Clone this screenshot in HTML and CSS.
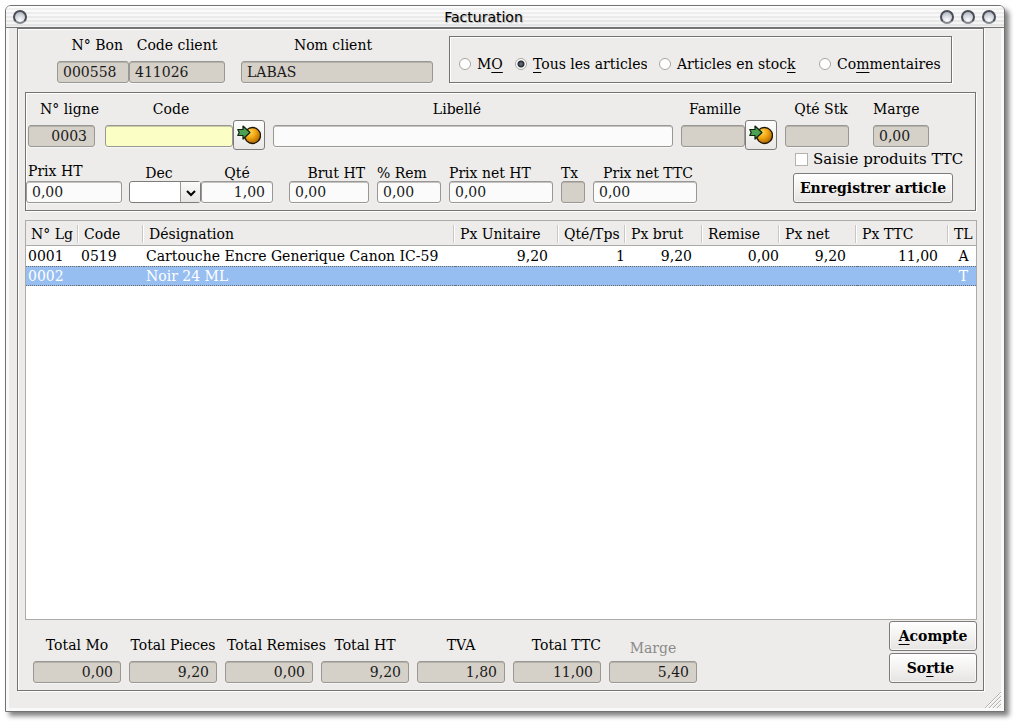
FILE: index.html
```html
<!DOCTYPE html>
<html lang="fr">
<head>
<meta charset="utf-8">
<title>Facturation</title>
<link rel="stylesheet" href="styles.css">
</head>
<body>
<svg class="defs" aria-hidden="true">
  <defs>
    <radialGradient id="ball" cx="35%" cy="30%" r="75%">
      <stop offset="0" stop-color="#ffd75a"/><stop offset=".45" stop-color="#f3a812"/><stop offset="1" stop-color="#a86400"/>
    </radialGradient>
    <symbol id="pick" viewBox="0 0 24 20">
      <circle cx="15.500" cy="10.500" r="8" fill="url(#ball)" stroke="#1d1405" stroke-width="1.300"/>
      <path d="M.8 4.500h5.200V1L13 7.500 6 14v-3.500H.8l1.400-3z" fill="#4aa152" stroke="#10230f" stroke-width="1.200" stroke-linejoin="round"/>
    </symbol>
  </defs>
</svg>
<div class="window">
  <header class="titlebar">
    <button class="orb" aria-label="Menu"></button>
    <h1 class="title">Facturation</h1>
    <div class="orbs">
      <button class="orb" aria-label="Réduire"></button>
      <button class="orb" aria-label="Agrandir"></button>
      <button class="orb" aria-label="Fermer"></button>
    </div>
  </header>
  <main class="client">
    <form class="panel">
      <section class="head">
        <div class="field c-bon"><label class="end" for="bon">N° Bon</label><input id="bon" value="000558" readonly></div>
        <div class="field"><label for="client">Code client</label><input id="client" value="411026" readonly></div>
        <div class="field c-nom"><label for="nom">Nom client</label><input id="nom" value="LABAS" readonly></div>
        <div class="filter" role="radiogroup" aria-label="Filtre">
          <label class="choice"><input type="radio" name="f"><span>M<u>O</u></span></label>
          <label class="choice clipped"><input type="radio" name="f" checked><span><u>T</u>ous les articles</span></label>
          <label class="choice"><input type="radio" name="f"><span>Articles en stoc<u>k</u></span></label>
          <label class="choice"><input type="radio" name="f"><span>Co<u>m</u>mentaires</span></label>
        </div>
      </section>

      <section class="entry">
        <div class="row-a">
          <div class="field a-ligne"><label class="end" for="ligne">N° ligne</label><input class="num" id="ligne" value="0003" readonly></div>
          <div class="field a-code"><label for="code">Code</label><input class="active" id="code"></div>
          <button class="pick a-pick1" type="button" aria-label="Choisir un article"><svg><use href="#pick"/></svg></button>
          <div class="field a-lib"><label for="lib">Libellé</label><input id="lib"></div>
          <div class="field a-fam"><label for="fam">Famille</label><input id="fam" readonly></div>
          <button class="pick a-pick2" type="button" aria-label="Choisir une famille"><svg><use href="#pick"/></svg></button>
          <div class="field a-stk"><label for="stk">Qté Stk</label><input id="stk" readonly></div>
          <div class="field a-marge"><label class="start" for="marge">Marge</label><input id="marge" value="0,00" readonly></div>
        </div>
        <div class="row-b">
          <div class="field b-prix"><label class="start" for="prix">Prix HT</label><input id="prix" value="0,00"></div>
          <div class="field b-dec"><label for="dec">Dec</label>
            <div class="combo"><select id="dec"><option></option></select><span class="arrow"><svg viewBox="0 0 10 8"><path d="M1 1l4 4 4-4" /></svg></span></div></div>
          <div class="field b-qte"><label for="qte">Qté</label><input class="num" id="qte" value="1,00"></div>
          <div class="field b-brut"><label class="end" for="brut">Brut HT</label><input id="brut" value="0,00"></div>
          <div class="field b-rem"><label class="start" for="rem">% Rem</label><input id="rem" value="0,00"></div>
          <div class="field b-net"><label class="start" for="net">Prix net HT</label><input id="net" value="0,00"></div>
          <div class="field b-tx"><label class="start" for="tx">Tx</label><input id="tx" readonly></div>
          <div class="field b-ttc"><label class="end" for="ttc">Prix net TTC</label><input id="ttc" value="0,00"></div>
          <div class="save">
            <label class="tick"><input type="checkbox"><span>Saisie produits TTC</span></label>
            <button class="btn" type="button">Enregistrer article</button>
          </div>
        </div>
      </section>

      <section class="list">
        <table>
          <colgroup><col class="w-lg"><col class="w-code"><col><col class="w-unit"><col class="w-qte"><col class="w-px"><col class="w-px"><col class="w-px"><col class="w-ttc"><col class="w-tl"></colgroup>
          <thead><tr><th>N° Lg</th><th>Code</th><th>Désignation</th><th>Px Unitaire</th><th>Qté/Tps</th><th>Px brut</th><th>Remise</th><th>Px net</th><th>Px TTC</th><th>TL</th></tr></thead>
          <tbody>
            <tr><td>0001</td><td>0519</td><td>Cartouche Encre Generique Canon IC-59</td><td class="r">9,20</td><td class="r0">1</td><td class="r">9,20</td><td class="r0">0,00</td><td class="r">9,20</td><td class="r">11,00</td><td class="mid">A</td></tr>
            <tr class="selected"><td>0002</td><td></td><td>Noir 24 ML</td><td></td><td></td><td></td><td></td><td></td><td></td><td class="mid">T</td></tr>
          </tbody>
        </table>
      </section>

      <footer class="totals">
        <div class="sums">
          <div class="field"><label for="t1">Total Mo</label><input class="num" id="t1" value="0,00" readonly></div>
          <div class="field"><label for="t2">Total Pieces</label><input class="num" id="t2" value="9,20" readonly></div>
          <div class="field"><label class="start" for="t3">Total Remises</label><input class="num" id="t3" value="0,00" readonly></div>
          <div class="field"><label for="t4">Total HT</label><input class="num" id="t4" value="9,20" readonly></div>
          <div class="field"><label for="t5">TVA</label><input class="num" id="t5" value="1,80" readonly></div>
          <div class="field"><label class="end" for="t6">Total TTC</label><input class="num" id="t6" value="11,00" readonly></div>
          <div class="field"><label class="dim" for="t7">Marge</label><input class="num" id="t7" value="5,40" readonly></div>
        </div>
        <div class="actions">
          <button class="btn" type="button"><span><u>A</u>compte</span></button>
          <button class="btn sortie" type="button"><span>So<u>r</u>tie</span></button>
        </div>
      </footer>
    </form>
    <svg class="grip" viewBox="0 0 17 17" aria-hidden="true">
      <path class="lite" d="M2 17L17 2M6 17L17 6M10 17L17 10M14 17l3-3"/>
      <path class="dark" d="M1 17L17 1M5 17L17 5M9 17L17 9M13 17l4-4"/>
    </svg>
  </main>
</div>
</body>
</html>
```
FILE: styles.css
```css
* { box-sizing: border-box; }

body {
  margin: 0;
  height: 100vh;
  padding: 5px 9px 9px 5px;
  background: #fff;
  color: #000;
  font: 14px/18px "DejaVu Serif", serif;
}

input, select, button { font: inherit; color: inherit; margin: 0; min-width: 0; }
u { text-underline-offset: 3px; text-decoration-thickness: 1px; text-decoration-skip-ink: none; }
.defs { position: absolute; width: 0; height: 0; }

/* Window frame */
.window {
  display: flex;
  flex-direction: column;
  height: 100%;
  border: 1px solid #737373;
  border-radius: 6px 6px 0 0;
  box-shadow: 4px 4px 5px rgba(0, 0, 0, .5);
  background: #edecea;
}
.titlebar {
  display: flex;
  align-items: center;
  justify-content: space-between;
  height: 22px;
  flex: none;
  padding: 0 8px 0 7px;
  border-bottom: 1px solid #737373;
  border-radius: 5px 5px 0 0;
  background:
    linear-gradient(rgba(255, 255, 255, .5), rgba(215, 215, 215, .25)),
    repeating-linear-gradient(#fbfbfb 0 2px, #e6e6e6 2px 4px);
}
.title {
  margin: 0;
  font: 14px/18px "DejaVu Sans", sans-serif;
  text-shadow: 1px 1px 1px #aaa;
}
.orbs { display: flex; gap: 7px; }
.orb {
  width: 14px;
  height: 14px;
  padding: 0;
  border: 2px solid #4a4d55;
  border-bottom-color: #85888e;
  border-radius: 50%;
  background: radial-gradient(circle at 50% 85%, #fff, #ccd1d9 60%, #9aa1ad);
}
.client {
  position: relative;
  display: flex;
  flex: 1;
  min-height: 0;
  padding: 0 20px 20px 11px;
  box-shadow: inset 3px 0 #f9f9f9, inset -3px -3px #f9f9f9;
}
.panel {
  display: flex;
  flex-direction: column;
  flex: 1;
  min-width: 0;
  border: 1px solid #737373;
  box-shadow: inset 1px 1px #fff, 1px 1px #fff;
}
.grip { position: absolute; right: 3px; bottom: 3px; width: 17px; height: 17px; fill: none; }
.grip .dark { stroke: #b5b2ae; }
.grip .lite { stroke: #fff; }

/* Fields */
.field { display: flex; flex-direction: column; gap: 7px; min-width: 0; }
.field label { display: block; height: 18px; white-space: nowrap; text-align: center; }
.field label.start { text-align: left; }
.field label.end { text-align: right; }
.field label.dim { color: #8b8a88; }
.field input {
  width: 100%;
  height: 22px;
  padding: 0 5px;
  border: 1px solid #9a9894;
  border-radius: 3px;
  background: #fbfbfb;
  box-shadow: inset 0 1px #c4c3c1, 0 1px #f7f6f5;
  color: #1a1a1a;
  outline: 0;
}
.field input[readonly] { background: #d5d0c8; box-shadow: inset 0 1px #b6b2ab, 0 1px #f7f6f5; }
.field input.active { background: #fbffc5; box-shadow: inset 0 1px #c8cba4, 0 1px #f7f6f5; }
.field input.num { text-align: right; padding-right: 7px; }

.btn {
  width: 100%;
  height: 30px;
  padding: 0;
  border: 1px solid #7d7c7a;
  border-radius: 3px;
  background: linear-gradient(#fff, #f3f2f1 50%, #e5e4e2);
  box-shadow: inset 0 0 0 1px rgba(255, 255, 255, .6);
  color: #000;
  font-weight: bold;
  white-space: nowrap;
}

/* Header row */
.head {
  display: grid;
  grid-template-columns: minmax(0, 72fr) minmax(0, 96fr) minmax(0, 16fr) minmax(0, 192fr) minmax(0, 16fr) minmax(0, 503fr);
  padding: 7px 31px 0 39px;
}
.head .c-nom { grid-column: 4; }
.head .c-bon label { padding-right: 6px; }
.head .c-nom label { padding-right: 8px; }
.filter {
  grid-column: 6;
  display: grid;
  grid-template-columns: 44fr 132fr 148fr 132fr;
  column-gap: 12px;
  height: 47px;
  padding: 18px 0 0 9px;
  border: 1px solid #737373;
  box-shadow: inset 1px 1px #fff, 1px 1px #fff;
}
.choice { display: flex; gap: 6px; min-width: 0; height: 20px; white-space: nowrap; }
.choice.clipped { overflow: hidden; }
.choice input {
  appearance: none;
  flex: none;
  width: 12px;
  height: 12px;
  margin-top: 3px;
  border: 1px solid #aba6a0;
  border-radius: 50%;
  background: #fff;
}
.choice input:checked { background: radial-gradient(circle, #5b6573 0 1px, #20262e 3px, #fff 4px); }

/* Article entry */
.entry {
  margin: 9px 7px 0;
  height: 119px;
  border: 1px solid #737373;
  box-shadow: inset 1px 1px #fff, 1px 1px #fff;
}
.row-a, .row-b { display: grid; align-items: end; }
.row-a {
  grid-template-columns: 2fr 67fr 10fr 128fr 32px 8fr 400fr 8fr 64fr 32px 8fr 64fr 24fr 56fr 46fr;
  padding-top: 7px;
}
.row-a .field { margin-bottom: 3px; }
.a-ligne { grid-column: 2; }
.a-code { grid-column: 4; }
.a-pick1 { grid-column: 5; }
.a-lib { grid-column: 7; }
.a-fam { grid-column: 9; }
.a-pick2 { grid-column: 10; }
.a-stk { grid-column: 12; }
.a-marge { grid-column: 14; }
.a-ligne label.end { margin-right: -4px; }
.a-code label { padding-left: 4px; }
.a-lib label { padding-right: 32px; }
.a-fam label { padding-left: 4px; }
.a-stk label { margin-right: -8px; }
.pick {
  display: flex;
  align-items: center;
  justify-content: center;
  height: 30px;
  padding: 0;
  border: 1px solid #7d7c7a;
  border-radius: 3px;
  background: linear-gradient(#fdfdfd, #e8e7e5);
}
.pick svg { width: 24px; height: 20px; }

.row-b {
  grid-template-columns: 96fr 7fr 72fr 72fr 16fr 80fr 8fr 64fr 8fr 104fr 8fr 24fr 8fr 104fr 96fr minmax(0, 160fr) 22fr;
}
.row-b .field { gap: 0; }
.row-b .field label { line-height: 20px; }
.b-prix { grid-column: 1; }
.b-dec { grid-column: 3; }
.b-qte { grid-column: 4; }
.b-brut { grid-column: 6; }
.b-rem { grid-column: 8; }
.b-net { grid-column: 10; }
.b-tx { grid-column: 12; }
.b-ttc { grid-column: 14; }
.row-b .b-prix label { padding-left: 2px; height: 20px; }
.b-dec label { padding-right: 12px; }
.b-brut label.end, .b-ttc label.end { padding-right: 4px; }
.combo { position: relative; height: 22px; }
.combo select {
  appearance: none;
  width: 100%;
  height: 22px;
  padding: 0;
  border: 1px solid #7d7c7a;
  border-radius: 3px;
  background: #fff;
}
.combo .arrow {
  position: absolute;
  inset: 1px 1px 1px auto;
  display: flex;
  align-items: center;
  justify-content: center;
  width: 20px;
  border-left: 1px solid #9a9894;
  background: linear-gradient(#fbfbfb, #e6e5e3);
  pointer-events: none;
}
.combo .arrow svg { width: 10px; height: 8px; margin-top: 3px; fill: none; stroke: #000; stroke-width: 2; }
.save { grid-column: 16; display: flex; flex-direction: column; gap: 5px; min-width: 0; }
.tick {
  display: flex;
  align-items: center;
  gap: 5px;
  height: 18px;
  padding-left: 2px;
  font-size: 15px;
  white-space: nowrap;
}
.tick input {
  appearance: none;
  flex: none;
  width: 13px;
  height: 13px;
  border: 1px solid #b5b1ac;
  background: #fff;
}

/* Line list */
.list {
  flex: 1;
  min-height: 0;
  margin: 9px 6px 0 7px;
  border: 1px solid #adaba8;
  background: #fff;
}
.list table { width: 100%; table-layout: fixed; border-collapse: separate; border-spacing: 0; }
.w-lg { width: 53px; }
.w-code { width: 65px; }
.w-unit { width: 104px; }
.w-qte { width: 67px; }
.w-px { width: 77px; }
.w-ttc { width: 92px; }
.w-tl { width: 27px; }
.list th {
  height: 25px;
  padding: 2px 0 0 5px;
  border-bottom: 1px solid #adaba8;
  background: linear-gradient(#c9c7c4, #c9c7c4) right 1px top 4px / 1px 18px no-repeat, linear-gradient(#fff, #fff) right 0 top 4px / 1px 18px no-repeat, #edecea;
  font-weight: normal;
  text-align: left;
  white-space: nowrap;
}
.list th:last-child { background: #edecea; }
.list td { height: 20px; padding: 0 0 0 2px; white-space: nowrap; }
.list td.r { text-align: right; padding-right: 11px; }
.list td.r0 { text-align: right; padding-right: 1px; }
.list td.mid { text-align: center; }
.list .selected td {
  border-top: 1px dotted #6b6b6b;
  border-bottom: 1px dotted #6b6b6b;
  background: #97bef1;
  color: #fff;
}

/* Totals */
.totals {
  display: flex;
  justify-content: space-between;
  height: 70px;
  padding: 1px 6px 0 15px;
}
.sums {
  display: grid;
  grid-template-columns: repeat(7, minmax(0, 1fr));
  gap: 8px;
  flex: 0 1 664px;
  padding-top: 15px;
}
.sums label.start { padding-left: 2px; }
.sums .dim { padding-top: 3px; }
.actions { display: flex; flex-direction: column; gap: 2px; flex: none; width: 88px; }
.btn.sortie { padding-right: 5px; }
```
